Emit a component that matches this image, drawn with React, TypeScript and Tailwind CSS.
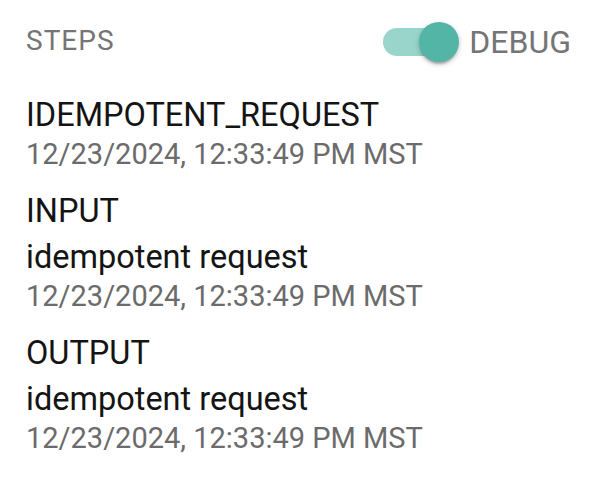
const steps = [
  { name: 'IDEMPOTENT_REQUEST', value: null, time: '12/23/2024, 12:33:49 PM MST' },
  { name: 'INPUT', value: 'idempotent request', time: '12/23/2024, 12:33:49 PM MST' },
  { name: 'OUTPUT', value: 'idempotent request', time: '12/23/2024, 12:33:49 PM MST' }
];

function DebugSwitch() {
  return (
    <div className="relative h-10 w-[76px] shrink-0">
      <div className="absolute left-0 top-[6px] h-[28px] w-[68px] rounded-full bg-[#99d5cb]" />
      <div className="absolute left-[36px] top-0 h-10 w-10 rounded-full bg-[#52b5a5] shadow-[0_4px_2px_-2px_rgba(0,0,0,0.2),0_2px_4px_0_rgba(0,0,0,0.14),0_2px_6px_0_rgba(0,0,0,0.12)]" />
    </div>
  );
}

export default function App() {
  return (
    <div className="min-h-[480px] w-[604px] bg-white pl-[26px] pr-[33px] font-['Roboto',sans-serif]">
      <div className="mt-[12px] flex h-[60px] items-center justify-between">
        <span className="mb-[2px] text-[28px] leading-none tracking-[1px] text-[#757575]">STEPS</span>
        <div className="flex items-center">
          <DebugSwitch />
          <span className="ml-[10px] text-[32px] leading-none text-[#757575]">DEBUG</span>
        </div>
      </div>
      <div className="mt-[20px] flex flex-col gap-[17px]">
        {steps.map((step) => (
          <div key={step.name} className="flex flex-col">
            <p className="text-[32.5px] leading-[46px] text-[#141414]">{step.name}</p>
            {step.value ? <p className="text-[32.5px] leading-[46px] text-[#141414]">{step.value}</p> : null}
            <p className="text-[29px] leading-[33px] text-[#6b6b6b]">{step.time}</p>
          </div>
        ))}
      </div>
    </div>
  );
}
